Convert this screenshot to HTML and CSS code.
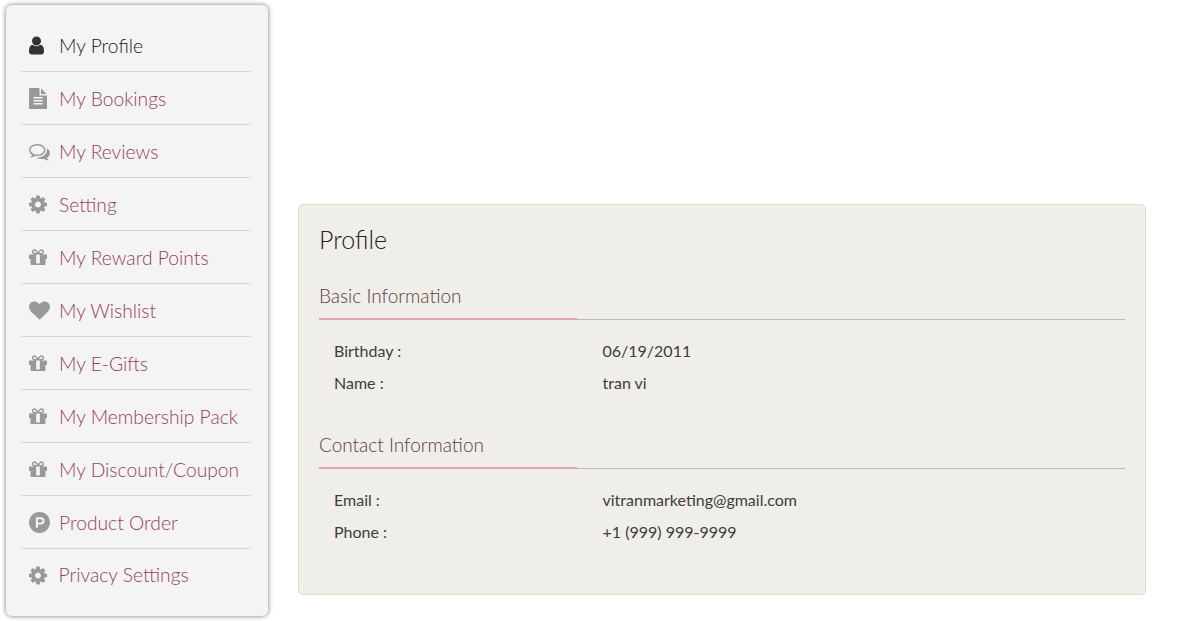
FILE: index.html
```html
<!DOCTYPE html>
<html lang="en">
  <head>
    <meta charset="UTF-8" />
    <meta name="viewport" content="width=device-width, initial-scale=1.0" />
    <title>My Profile</title>
    <link rel="stylesheet" href="styles.css">
  </head>
  <body>
    <div class="page">
      <nav class="side-menu">
        <a class="menu-item active" href="#">
          <svg class="menu-icon" viewBox="256 0 1792 1792"><path d="M1536 1399q0 109-62.500 187t-150.500 78h-854q-88 0-150.500-78t-62.500-187q0-85 8.500-160.500t31.500-151.500 58.500-131 94-89 134.500-34.500q131 128 313 128t313-128q76 0 134.500 34.500t94 89 58.500 131 31.500 151.500 8.500 160.500zm-256-887q0 159-112.500 271.500t-271.500 112.500-271.500-112.500-112.500-271.500 112.500-271.500 271.500-112.500 271.500 112.500 112.500 271.500z"/></svg>
          <span>My Profile</span>
        </a>
        <a class="menu-item" href="#">
          <svg class="menu-icon" viewBox="128 0 1792 1792"><path d="M1596 476q14 14 28 36h-472v-472q22 14 36 28zm-476 164h544v1056q0 40-28 68t-68 28h-1344q-40 0-68-28t-28-68v-1600q0-40 28-68t68-28h800v544q0 40 28 68t68 28zm160 736v-64q0-14-9-23t-23-9h-704q-14 0-23 9t-9 23v64q0 14 9 23t23 9h704q14 0 23-9t9-23zm0-256v-64q0-14-9-23t-23-9h-704q-14 0-23 9t-9 23v64q0 14 9 23t23 9h704q14 0 23-9t9-23zm0-256v-64q0-14-9-23t-23-9h-704q-14 0-23 9t-9 23v64q0 14 9 23t23 9h704q14 0 23-9t9-23z"/></svg>
          <span>My Bookings</span>
        </a>
        <a class="menu-item" href="#">
          <svg class="menu-icon" viewBox="0 0 1792 1792"><path d="M704 384q-153 0-286 52t-211.500 141-78.500 191q0 82 53 158t149 132l97 56-35 84q34-20 62-39l44-31 53 10q78 14 153 14 153 0 286-52t211.500-141 78.500-191-78.500-191-211.500-141-286-52zm0-128q191 0 353.500 68.500t256.500 186.500 94 257-94 257-256.500 186.500-353.500 68.500q-86 0-176-16-124 88-278 128-36 9-86 16h-3q-11 0-20.500-8t-11.500-21q-1-3-1-6.500t.5-6.500 2-6l2.500-5 3.500-5.500 4-5 4.500-5 4-4.500q5-6 23-25t26-29.500 22.500-29 25-38.500 20.500-44q-124-72-195-177t-71-224q0-139 94-257t256.500-186.500 353.500-68.500zm822 1169q10 24 20.500 44t25 38.500 22.500 29 26 29.500 23 25q1 1 4 4.500t4.500 5 4 5 3.500 5.500l2.500 5 2 6 .5 6.500-1 6.500q-3 14-13 22t-22 7q-50-7-86-16-154-40-278-128-90 16-176 16-271 0-472-132 58 4 88 4 161 0 309-45t264-129q125-92 192-212t67-254q0-77-23-152 129 71 204 178t75 230q0 120-71 224.500t-195 176.500z"/></svg>
          <span>My Reviews</span>
        </a>
        <a class="menu-item" href="#">
          <svg class="menu-icon" viewBox="128 0 1792 1792"><use href="#icon-cog"/></svg>
          <span>Setting</span>
        </a>
        <a class="menu-item" href="#">
          <svg class="menu-icon" viewBox="128 0 1792 1792"><use href="#icon-gift"/></svg>
          <span>My Reward Points</span>
        </a>
        <a class="menu-item" href="#">
          <svg class="menu-icon" viewBox="0 0 1792 1792"><path d="M896 1664q-26 0-44-18l-624-602q-10-8-27.500-26t-55.500-65.500-68-97.500-53.500-121-23.500-138q0-220 127-344t351-124q62 0 126.500 21.500t120 58 95.500 68.500 76 68q36-36 76-68t95.500-68.500 120-58 126.500-21.500q224 0 351 124t127 344q0 221-229 450l-623 600q-18 18-44 18z"/></svg>
          <span>My Wishlist</span>
        </a>
        <a class="menu-item" href="#">
          <svg class="menu-icon" viewBox="128 0 1792 1792"><use href="#icon-gift"/></svg>
          <span>My E-Gifts</span>
        </a>
        <a class="menu-item" href="#">
          <svg class="menu-icon" viewBox="128 0 1792 1792"><use href="#icon-gift"/></svg>
          <span>My Membership Pack</span>
        </a>
        <a class="menu-item" href="#">
          <svg class="menu-icon" viewBox="128 0 1792 1792"><use href="#icon-gift"/></svg>
          <span>My Discount/Coupon</span>
        </a>
        <a class="menu-item" href="#">
          <svg class="menu-icon" viewBox="0 0 1792 1792"><path d="M1150 762q0 56-39.500 95t-95.500 39h-253v-269h253q56 0 95.500 39.500t39.500 95.500zm179 0q0-130-91.500-222t-222.500-92h-433v896h180v-269h253q130 0 222-91.500t92-221.500zm463 134q0 182-71 348t-191 286-286 191-348 71-348-71-286-191-191-286-71-348 71-348 191-286 286-191 348-71 348 71 286 191 191 286 71 348z"/></svg>
          <span>Product Order</span>
        </a>
        <a class="menu-item last" href="#">
          <svg class="menu-icon" viewBox="128 0 1792 1792"><use href="#icon-cog"/></svg>
          <span>Privacy Settings</span>
        </a>
      </nav>

      <main class="profile-panel">
        <h2 class="panel-title">Profile</h2>

        <section class="info-block">
          <div class="info-head"><h3>Basic Information</h3></div>
          <dl class="info-list">
            <dt>Birthday :</dt>
            <dd>06/19/2011</dd>
            <dt>Name :</dt>
            <dd>tran vi</dd>
          </dl>
        </section>

        <section class="info-block">
          <div class="info-head"><h3>Contact Information</h3></div>
          <dl class="info-list">
            <dt>Email :</dt>
            <dd>vitranmarketing@gmail.com</dd>
            <dt>Phone :</dt>
            <dd>+1 (999) 999-9999</dd>
          </dl>
        </section>

        <div class="panel-foot"></div>
      </main>
    </div>

    <svg class="icon-defs" width="0" height="0">
      <defs>
        <path id="icon-cog" d="M1152 896q0-106-75-181t-181-75-181 75-75 181 75 181 181 75 181-75 75-181zm512-109v222q0 12-8 23t-20 13l-185 28q-19 54-39 91 35 50 107 138 10 12 10 25t-9 23q-27 37-99 108t-94 71q-12 0-26-9l-138-108q-44 23-91 38-16 136-29 186-7 28-36 28h-222q-14 0-24.500-8.500t-11.500-21.500l-28-184q-49-16-90-37l-141 107q-10 9-25 9-14 0-25-11-126-114-165-168-7-10-7-23 0-12 8-23 15-21 51-66.500t54-70.500q-27-50-41-99l-183-27q-13-2-21-12.500t-8-23.500v-222q0-12 8-23t19-13l186-28q14-46 39-92-40-57-107-138-10-12-10-24 0-10 9-23 26-36 98.500-107.500t94.500-71.500q13 0 26 10l138 107q44-23 91-38 16-136 29-186 7-28 36-28h222q14 0 24.500 8.500t11.500 21.500l28 184q49 16 90 37l142-107q9-9 24-9 13 0 25 10 129 119 165 170 7 8 7 22 0 12-8 23-15 21-51 66.500t-54 70.500q26 50 41 98l183 28q13 2 21 12.500t8 23.500z"/>
        <path id="icon-gift" d="M1056 1356v-716h-320v716q0 25 18 38.500t46 13.500h192q28 0 46-13.500t18-38.500zm-456-844h195l-126-161q-26-31-69-31-40 0-68 28t-28 68 28 68 68 28zm688-96q0-40-28-68t-68-28q-43 0-69 31l-125 161h194q40 0 68-28t28-68zm376 256v320q0 14-9 23t-23 9h-96v416q0 40-28 68t-68 28h-1088q-40 0-68-28t-28-68v-416h-96q-14 0-23-9t-9-23v-320q0-14 9-23t23-9h440q-93 0-158.500-65.500t-65.500-158.500 65.500-158.500 158.500-65.500q107 0 168 77l128 165 128-165q61-77 168-77 93 0 158.500 65.500t65.500 158.500-65.500 158.500-158.500 65.500h440q14 0 23 9t9 23z"/>
      </defs>
    </svg>
  </body>
</html>
```

FILE: styles.css
```css
body {
  margin: 0;
  background-color: #fff;
  color: #333;
  font-family: "Lato", sans-serif;
}

.page {
  display: flex;
  align-items: flex-start;
  box-sizing: border-box;
  min-height: 621px;
  padding: 5px 0 0 6px;
}

.icon-defs {
  position: absolute;
}

/* left menu */
.side-menu {
  box-sizing: border-box;
  width: 262px;
  height: 611px;
  padding: 14px 17px 0 15px;
  background-color: #f4f4f4;
  border-radius: 6px;
  box-shadow: 0 0 5px rgba(0, 0, 0, 0.55);
}

.menu-item {
  display: flex;
  align-items: center;
  box-sizing: border-box;
  height: 53px;
  padding-left: 8px;
  border-bottom: 1px solid #d6d6d6;
  color: #98405e;
  font-size: 19.25px;
  font-weight: 300;
  text-decoration: none;
}

.menu-item.active {
  color: #222;
}

.menu-item.last {
  padding: 0 0 2px 7.5px;
  border-bottom: none;
}

.menu-icon {
  flex: none;
  width: 21px;
  height: 21px;
  margin: 1px 9px 0 0;
  fill: #999;
}

.active .menu-icon {
  fill: #333;
}

/* profile panel */
.profile-panel {
  box-sizing: border-box;
  width: 848px;
  height: 391px;
  margin: 199px 0 0 30px;
  padding: 18px 20px 0;
  background-color: #f0eee9;
  border: 1px solid #e3dccb;
  border-radius: 5px;
}

.panel-title {
  margin: 0 0 29px;
  color: #222;
  font-size: 25px;
  font-weight: 300;
  line-height: 32px;
}

.info-block {
  margin-bottom: 35px;
}

.info-head {
  border-bottom: 1px solid #bbb;
}

.info-head h3 {
  width: 258px;
  margin: 0 0 -1px;
  padding-bottom: 10px;
  border-bottom: 2px solid #e8a3b3;
  color: #5a4040;
  font-size: 19px;
  font-weight: 300;
  line-height: 24px;
}

.info-list {
  display: grid;
  grid-template-columns: 268.5px 1fr;
  grid-auto-rows: 32px;
  align-items: center;
  margin: 14px 0 0;
  padding-left: 15px;
  color: #3d3d3d;
  font-size: 16px;
}

.info-list dd {
  margin: 0;
}

.panel-foot {
  margin-top: -10px;
  border-top: 1px solid #ece9e4;
}
```
